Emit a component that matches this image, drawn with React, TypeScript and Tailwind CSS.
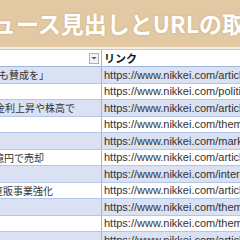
import React from "react";

const rows: { a: string; ml: number; b: string }[] = [
  { a: "議会も賛成を」", ml: -21, b: "https://www.nikkei.com/article/DGXZQO" },
  { a: "", ml: 0, b: "https://www.nikkei.com/politics/articles" },
  { a: "日銀金利上昇や株高で", ml: -25, b: "https://www.nikkei.com/article/DGXZQO" },
  { a: "", ml: 0, b: "https://www.nikkei.com/theme/?dw=1" },
  { a: "", ml: 0, b: "https://www.nikkei.com/markets/article" },
  { a: "億円で売却", ml: -6, b: "https://www.nikkei.com/article/DGXZQO" },
  { a: "", ml: 0, b: "https://www.nikkei.com/international/a" },
  { a: "直販事業強化", ml: -7, b: "https://www.nikkei.com/article/DGXZQO" },
  { a: "", ml: 0, b: "https://www.nikkei.com/theme/?dw=2" },
  { a: "", ml: 0, b: "https://www.nikkei.com/theme/?dw=3" },
  { a: "", ml: 0, b: "https://www.nikkei.com/article/DGXZQO" },
];

export default function App() {
  return (
    <div
      className="w-[240px] h-[240px] overflow-hidden bg-white"
      style={{ fontFamily: '"Liberation Sans", "Noto Sans CJK JP", sans-serif' }}
    >
      <div className="h-[47px] bg-[#e2c9a3] flex items-center overflow-hidden whitespace-nowrap">
        <span
          className="ml-[-30px] text-[23px] font-bold text-white leading-none [text-shadow:0_0_2px_rgba(180,140,90,0.6)]"
          style={{ fontFamily: '"Noto Sans CJK JP", sans-serif' }}
        >
          ニュース見出しとURLの取得
        </span>
      </div>
      <div className="h-[2px] bg-[#f4ece0]" />
      <div className="h-[18px] flex border-t border-[#c6c6c6] border-b border-b-[#9fb4dc] bg-white">
        <div className="w-[102px] flex items-center justify-end border-r border-[#9fb4dc] pr-[2px]">
          <div className="w-[10px] h-[11px] border border-[#b0b0b0] bg-[#f2f2f2] flex items-center justify-center">
            <svg width="6" height="4" viewBox="0 0 6 4">
              <path d="M0.5 1 L3 3.5 L5.5 1 Z" fill="#555" />
            </svg>
          </div>
        </div>
        <div
          className="pl-[2px] flex items-center text-[11px] font-bold text-[#1a1a1a] whitespace-nowrap"
          style={{ fontFamily: '"Noto Sans CJK JP", sans-serif' }}
        >
          リンク
        </div>
      </div>
      {rows.map((r, i) => (
        <div
          key={i}
          className={`h-[16.5px] flex border-b border-[#b4c6e7] ${
            i % 2 === 0 ? "bg-[#d9e1f2]" : "bg-white"
          }`}
        >
          <div className="w-[102px] shrink-0 overflow-hidden whitespace-nowrap border-r border-[#9fb4dc] flex items-center">
            <span
              className="text-[10px] text-[#333]"
              style={{ marginLeft: r.ml, fontFamily: '"Noto Sans CJK JP", sans-serif' }}
            >
              {r.a}
            </span>
          </div>
          <div className="pl-[2px] overflow-hidden whitespace-nowrap flex items-center text-[11px] text-[#333]">
            {r.b}
          </div>
        </div>
      ))}
    </div>
  );
}
